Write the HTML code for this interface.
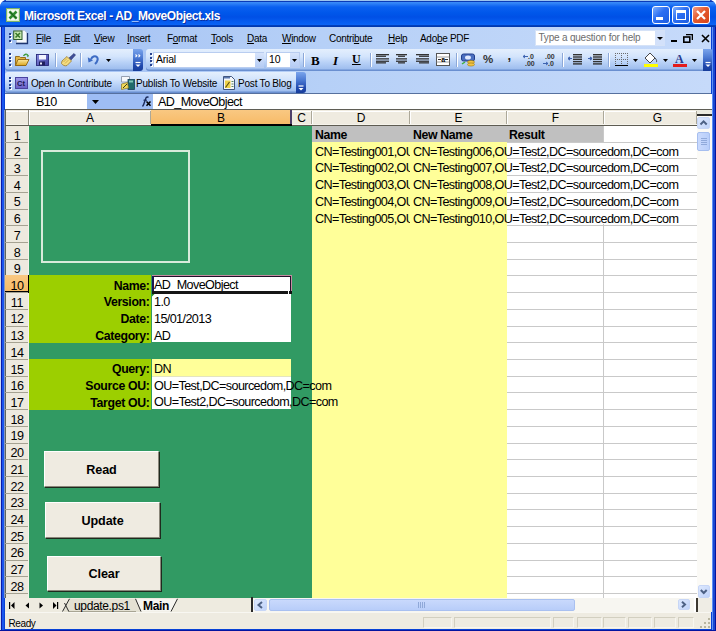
<!DOCTYPE html>
<html><head><meta charset="utf-8"><title>Microsoft Excel - AD_MoveObject.xls</title>
<style>html,body{margin:0;padding:0;}body{width:716px;height:631px;overflow:hidden;position:relative;font-family:'Liberation Sans', sans-serif;}</style>
</head><body>
<div style="position:absolute;left:0px;top:0px;width:716px;height:631px;background:#0842D6;border-radius:7px 7px 0 0"></div>
<div style="position:absolute;left:0px;top:0px;width:716px;height:27px;background:linear-gradient(#0A3AB8 0px,#0A3AB8 1.5px,#3C8EF8 2px,#2A7CF6 4px,#0A60F0 7px,#0057EA 13px,#0050E6 17px,#065CF0 22px,#0A64F5 25px,#0038B0 25.6px,#0038B0 27px);border-radius:7px 7px 0 0"></div>
<div style="position:absolute;left:6px;top:0px;width:704px;height:1px;background:#9CC4EE"></div>
<svg style="position:absolute;left:6px;top:8px" width="14" height="14" viewBox="0 0 14 14">
<rect x="0.5" y="0.5" width="13" height="13" fill="#DDEFD0" stroke="#7DB26A"/>
<rect x="2" y="2" width="10" height="10" fill="#F3FAEE"/>
<path d="M3.5 3.5 L10.5 10.5 M10.5 3.5 L3.5 10.5" stroke="#2E8A2E" stroke-width="2.6"/>
<path d="M3.5 3.5 L10.5 10.5" stroke="#1B5E1B" stroke-width="1"/>
</svg>
<div style="position:absolute;left:24px;top:9px;white-space:pre;font:bold 12px 'Liberation Sans', sans-serif;color:#fff;letter-spacing:-0.43px;text-shadow:1px 1px 0 #0A2FA0">Microsoft Excel - AD_MoveObject.xls</div>
<div style="position:absolute;left:652px;top:6px;width:18px;height:18px;background:linear-gradient(135deg,#7FB0FF,#2C6EF2 45%,#1D5DE0);border:1px solid #fff;border-radius:3px;box-sizing:border-box"></div>
<div style="position:absolute;left:672px;top:6px;width:18px;height:18px;background:linear-gradient(135deg,#7FB0FF,#2C6EF2 45%,#1D5DE0);border:1px solid #fff;border-radius:3px;box-sizing:border-box"></div>
<div style="position:absolute;left:692px;top:6px;width:18px;height:18px;background:linear-gradient(135deg,#F3A08A,#E35A2F 45%,#D84318);border:1px solid #fff;border-radius:3px;box-sizing:border-box"></div>
<div style="position:absolute;left:656px;top:17px;width:7px;height:3px;background:#fff"></div>
<div style="position:absolute;left:676px;top:10px;width:10px;height:10px;border:1px solid #fff;border-top-width:3px;box-sizing:border-box"></div>
<svg style="position:absolute;left:692px;top:6px" width="18" height="18"><path d="M5 5 L13 13 M13 5 L5 13" stroke="#fff" stroke-width="2.2"/></svg>
<div style="position:absolute;left:5px;top:27px;width:706px;height:66px;background:linear-gradient(90deg,#A2C0F3 0%,#B6D0F7 45%,#C6DAFA 100%)"></div>
<div style="position:absolute;left:9px;top:32.5px;width:2px;height:2px;background:#27418F;box-shadow:1px 1px 0 #fff"></div>
<div style="position:absolute;left:9px;top:36.05px;width:2px;height:2px;background:#27418F;box-shadow:1px 1px 0 #fff"></div>
<div style="position:absolute;left:9px;top:39.6px;width:2px;height:2px;background:#27418F;box-shadow:1px 1px 0 #fff"></div>
<svg style="position:absolute;left:13px;top:30px" width="16" height="15" viewBox="0 0 16 15">
<path d="M3.5 0.5 H11.5 L14 3 V13 H3.5 Z" fill="#F4F7FC" stroke="#B8C4DA" stroke-width=".8"/>
<path d="M3 13.5 H14.5 V3" stroke="#1E3470" stroke-width="1.3" fill="none"/>
<rect x="0.7" y="1" width="8.3" height="8.5" fill="#C8E8B0" stroke="#2E5E2E" stroke-width="1"/>
<path d="M2.5 3 L7 7.5 M7 3 L2.5 7.5" stroke="#3A7A2A" stroke-width="1.6"/>
</svg>
<div style="position:absolute;left:36px;top:33px;white-space:pre;font:10px 'Liberation Sans', sans-serif;color:#000;letter-spacing:-0.3px"><u>F</u>ile</div>
<div style="position:absolute;left:64px;top:33px;white-space:pre;font:10px 'Liberation Sans', sans-serif;color:#000;letter-spacing:-0.3px"><u>E</u>dit</div>
<div style="position:absolute;left:94px;top:33px;white-space:pre;font:10px 'Liberation Sans', sans-serif;color:#000;letter-spacing:-0.3px"><u>V</u>iew</div>
<div style="position:absolute;left:127px;top:33px;white-space:pre;font:10px 'Liberation Sans', sans-serif;color:#000;letter-spacing:-0.3px"><u>I</u>nsert</div>
<div style="position:absolute;left:167px;top:33px;white-space:pre;font:10px 'Liberation Sans', sans-serif;color:#000;letter-spacing:-0.3px">F<u>o</u>rmat</div>
<div style="position:absolute;left:211px;top:33px;white-space:pre;font:10px 'Liberation Sans', sans-serif;color:#000;letter-spacing:-0.3px"><u>T</u>ools</div>
<div style="position:absolute;left:247px;top:33px;white-space:pre;font:10px 'Liberation Sans', sans-serif;color:#000;letter-spacing:-0.3px"><u>D</u>ata</div>
<div style="position:absolute;left:282px;top:33px;white-space:pre;font:10px 'Liberation Sans', sans-serif;color:#000;letter-spacing:-0.3px"><u>W</u>indow</div>
<div style="position:absolute;left:329px;top:33px;white-space:pre;font:10px 'Liberation Sans', sans-serif;color:#000;letter-spacing:-0.3px">Contri<u>b</u>ute</div>
<div style="position:absolute;left:388px;top:33px;white-space:pre;font:10px 'Liberation Sans', sans-serif;color:#000;letter-spacing:-0.3px"><u>H</u>elp</div>
<div style="position:absolute;left:420px;top:33px;white-space:pre;font:10px 'Liberation Sans', sans-serif;color:#000;letter-spacing:-0.3px">Ado<u>b</u>e PDF</div>
<div style="position:absolute;left:535px;top:30px;width:130px;height:16px;background:#fff;border:1px solid #D5E2F7;box-sizing:border-box"></div>
<div style="position:absolute;left:538.5px;top:32px;white-space:pre;font:10px 'Liberation Sans', sans-serif;color:#6D6D6D;letter-spacing:-0.2px">Type a question for help</div>
<div style="position:absolute;left:654.5px;top:31px;width:10px;height:14px;background:#D3E1FA"></div>
<svg style="position:absolute;left:657px;top:37px" width="6" height="3"><path d="M0 0H6L3 3Z" fill="#000"/></svg>
<div style="position:absolute;left:670.5px;top:40px;width:6.5px;height:2px;background:#000"></div>
<svg style="position:absolute;left:683px;top:34px" width="10" height="9"><path d="M3 .5H9.5V6" stroke="#000" fill="none" stroke-width="1.6"/><rect x="0.8" y="3" width="6" height="5.2" stroke="#000" fill="none" stroke-width="1.6"/></svg>
<svg style="position:absolute;left:700.5px;top:33.5px" width="9" height="9"><path d="M1 1L8 8M8 1L1 8" stroke="#000" stroke-width="1.6"/></svg>
<div style="position:absolute;left:5px;top:49px;width:129px;height:22px;background:linear-gradient(#E4EFFD 0%,#D3E4FC 35%,#B9D2F7 60%,#97B8EC 100%);border-radius:3px 0 0 3px;box-shadow:inset 0 -1.5px 0 #6A8FD0"></div>
<div style="position:absolute;left:133px;top:49px;width:10px;height:22px;background:linear-gradient(#7AA4EC,#4A78D2 40%,#2149AE 75%,#163C9A);border-radius:0 3px 3px 0"></div>
<div style="position:absolute;left:9px;top:53.0px;width:2px;height:2px;background:#27418F;box-shadow:1px 1px 0 #fff"></div>
<div style="position:absolute;left:9px;top:56.55px;width:2px;height:2px;background:#27418F;box-shadow:1px 1px 0 #fff"></div>
<div style="position:absolute;left:9px;top:60.1px;width:2px;height:2px;background:#27418F;box-shadow:1px 1px 0 #fff"></div>
<div style="position:absolute;left:9px;top:63.65px;width:2px;height:2px;background:#27418F;box-shadow:1px 1px 0 #fff"></div>
<svg style="position:absolute;left:133px;top:49px" width="10" height="22"><path d="M2.5 5.5l1.3 1.3l-1.3 1.3M5.5 5.5l1.3 1.3l-1.3 1.3" stroke="#fff" stroke-width="1.1" fill="none"/><path d="M2.5 13.5H7.5" stroke="#fff" stroke-width="1.2"/><path d="M2.5 15.5H7.5L5 18Z" fill="#fff"/></svg>
<svg style="position:absolute;left:15px;top:53px" width="15" height="14" viewBox="0 0 15 14">
<defs><linearGradient id="fo" x1="0" y1="0" x2="0" y2="1"><stop offset="0" stop-color="#FCE9A0"/><stop offset="1" stop-color="#D9A520"/></linearGradient></defs>
<path d="M0.5 3.5 H4.5 L5.5 4.5 H10.5 V12.5 H0.5 Z" fill="#E2B440" stroke="#8E6410" stroke-width=".9"/>
<path d="M0.5 12.5 L3 6.5 H14 L11 12.5 Z" fill="url(#fo)" stroke="#8E6410" stroke-width=".9"/>
<path d="M8.5 3 C9.5 1,12 0.5,13 2.5" stroke="#3C9A3C" fill="none" stroke-width="1.3"/>
<path d="M11.5 2.5 L14 2 L13 4.5 Z" fill="#3C9A3C"/>
</svg>
<svg style="position:absolute;left:36px;top:54px" width="13" height="12" viewBox="0 0 13 12">
<defs><linearGradient id="fl" x1="0" y1="0" x2="1" y2="1"><stop offset="0" stop-color="#8C8EE0"/><stop offset="1" stop-color="#3A3D9E"/></linearGradient></defs>
<rect x="0.5" y="0.5" width="12" height="11" fill="url(#fl)" stroke="#28297A" stroke-width=".9"/>
<rect x="3" y="1" width="7" height="4.5" fill="#F4F5FF"/>
<rect x="3" y="7.5" width="6" height="4" fill="#1E1F5C"/>
<rect x="4" y="8.5" width="2" height="2" fill="#E8E8F8"/>
</svg>
<div style="position:absolute;left:55px;top:53px;width:1px;height:14px;background:#8CA8D8;box-shadow:1px 0 0 #fff"></div>
<svg style="position:absolute;left:60px;top:53px" width="16" height="14" viewBox="0 0 16 14">
<path d="M9 5 L14 0.5 L15.5 2 L11 7 Z" fill="#3F4E9A" stroke="#28336E" stroke-width=".6"/>
<path d="M2 8 L7 3.5 L11.5 8 L7 12.5 C5 13.5,2.5 12,1.5 10.5 Z" fill="#F4DC80" stroke="#9C7A28" stroke-width=".8"/>
<path d="M3.5 9 L7 5.5 M5 10.5 L8.5 7" stroke="#C9A640" stroke-width=".8"/>
</svg>
<div style="position:absolute;left:80px;top:53px;width:1px;height:14px;background:#8CA8D8;box-shadow:1px 0 0 #fff"></div>
<svg style="position:absolute;left:87px;top:54px" width="12" height="11" viewBox="0 0 12 11">
<path d="M4 5.5 C5 2.5,8 1.5,9.8 3 C11.5 4.5,10.5 8,8 10" stroke="#3E6CC4" stroke-width="2.1" fill="none"/>
<path d="M0.8 3.2 L6 6.5 L1.5 8.5 Z" fill="#3E6CC4"/>
</svg>
<svg style="position:absolute;left:105.5px;top:59px" width="5" height="3"><path d="M0 0H5L2.5 3Z" fill="#000"/></svg>
<div style="position:absolute;left:146px;top:49px;width:557px;height:22px;background:linear-gradient(#E4EFFD 0%,#D3E4FC 35%,#B9D2F7 60%,#97B8EC 100%);border-radius:3px 0 0 3px;box-shadow:inset 0 -1.5px 0 #6A8FD0"></div>
<div style="position:absolute;left:703px;top:49px;width:10px;height:22px;background:linear-gradient(#7AA4EC,#4A78D2 40%,#2149AE 75%,#163C9A);border-radius:0 3px 3px 0"></div>
<svg style="position:absolute;left:703px;top:49px" width="10" height="22"><path d="M2.5 13.5H7.5" stroke="#fff" stroke-width="1.2"/><path d="M2.5 15.5H7.5L5 18Z" fill="#fff"/></svg>
<div style="position:absolute;left:150px;top:53.0px;width:2px;height:2px;background:#27418F;box-shadow:1px 1px 0 #fff"></div>
<div style="position:absolute;left:150px;top:56.55px;width:2px;height:2px;background:#27418F;box-shadow:1px 1px 0 #fff"></div>
<div style="position:absolute;left:150px;top:60.1px;width:2px;height:2px;background:#27418F;box-shadow:1px 1px 0 #fff"></div>
<div style="position:absolute;left:150px;top:63.65px;width:2px;height:2px;background:#27418F;box-shadow:1px 1px 0 #fff"></div>
<div style="position:absolute;left:153px;top:52px;width:111px;height:16px;background:#fff;border:1px solid #B9CDF0;box-sizing:border-box"></div>
<div style="position:absolute;left:156px;top:52.5px;white-space:pre;font:10.5px 'Liberation Sans', sans-serif;color:#000;letter-spacing:-0.2px">Arial</div>
<div style="position:absolute;left:255px;top:53px;width:9px;height:14px;background:linear-gradient(#D7E4FB,#B5CCF4)"></div>
<svg style="position:absolute;left:257px;top:59px" width="5" height="3"><path d="M0 0H5L2.5 3Z" fill="#000"/></svg>
<div style="position:absolute;left:266px;top:52px;width:34px;height:16px;background:#fff;border:1px solid #B9CDF0;box-sizing:border-box"></div>
<div style="position:absolute;left:269px;top:52.5px;white-space:pre;font:10.5px 'Liberation Sans', sans-serif;color:#000;letter-spacing:-0.2px">10</div>
<div style="position:absolute;left:290px;top:53px;width:9px;height:14px;background:linear-gradient(#D7E4FB,#B5CCF4)"></div>
<svg style="position:absolute;left:292px;top:59px" width="5" height="3"><path d="M0 0H5L2.5 3Z" fill="#000"/></svg>
<div style="position:absolute;left:303px;top:53px;width:1px;height:14px;background:#8CA8D8;box-shadow:1px 0 0 #fff"></div>
<div style="position:absolute;left:311px;top:53px;white-space:pre;font:bold 13px 'Liberation Serif', serif;color:#000">B</div>
<div style="position:absolute;left:333px;top:53px;white-space:pre;font:italic bold 13px 'Liberation Serif', serif;color:#000">I</div>
<div style="position:absolute;left:352px;top:52px;white-space:pre;font:bold 12px 'Liberation Serif', serif;color:#000;text-decoration:underline">U</div>
<div style="position:absolute;left:370px;top:53px;width:1px;height:14px;background:#8CA8D8;box-shadow:1px 0 0 #fff"></div>
<svg style="position:absolute;left:376px;top:54px" width="13" height="10"><rect x="0" y="0" width="13" height="1.3" fill="#333"/><rect x="0" y="1.6" width="10" height="1.3" fill="#333"/><rect x="0" y="4.2" width="13" height="1.3" fill="#333"/><rect x="0" y="6.6" width="13" height="1.3" fill="#333"/><rect x="0" y="8.2" width="10" height="1.3" fill="#333"/></svg>
<svg style="position:absolute;left:395px;top:54px" width="13" height="10"><rect x="1.0" y="0" width="11" height="1.3" fill="#333"/><rect x="3.0" y="1.6" width="7" height="1.3" fill="#333"/><rect x="1.0" y="4.2" width="11" height="1.3" fill="#333"/><rect x="1.0" y="6.6" width="11" height="1.3" fill="#333"/><rect x="3.0" y="8.2" width="7" height="1.3" fill="#333"/></svg>
<svg style="position:absolute;left:416px;top:54px" width="13" height="10"><rect x="0" y="0" width="13" height="1.3" fill="#333"/><rect x="3" y="1.6" width="10" height="1.3" fill="#333"/><rect x="0" y="4.2" width="13" height="1.3" fill="#333"/><rect x="0" y="6.6" width="13" height="1.3" fill="#333"/><rect x="3" y="8.2" width="10" height="1.3" fill="#333"/></svg>
<svg style="position:absolute;left:436px;top:53px" width="14" height="13" viewBox="0 0 14 13">
<rect x="0.5" y="0.5" width="13" height="12" fill="#fff" stroke="#555"/>
<path d="M0.5 4H13.5M0.5 9H13.5" stroke="#888" stroke-width=".8"/>
<path d="M2 6.5H5M9 6.5H12" stroke="#333"/>
<text x="5.2" y="9" font-size="7" font-family="Liberation Sans" font-weight="bold" fill="#000">a</text>
</svg>
<div style="position:absolute;left:456px;top:53px;width:1px;height:14px;background:#8CA8D8;box-shadow:1px 0 0 #fff"></div>
<svg style="position:absolute;left:461px;top:53px" width="15" height="14" viewBox="0 0 15 14">
<rect x="0.5" y="1" width="13" height="7" rx="2" fill="#4B6FC0" stroke="#223F8D"/>
<ellipse cx="7" cy="4.5" rx="3" ry="2" fill="#E0EAFF"/>
<ellipse cx="10" cy="9" rx="3.5" ry="1.6" fill="#F2C343" stroke="#9C7A10" stroke-width=".6"/>
<ellipse cx="10" cy="11.5" rx="3.5" ry="1.6" fill="#F2C343" stroke="#9C7A10" stroke-width=".6"/>
<path d="M1 11 L4 9" stroke="#3FAF3F" stroke-width="1.5"/>
</svg>
<div style="position:absolute;left:483px;top:52.5px;white-space:pre;font:bold 11.5px 'Liberation Sans', sans-serif;color:#333">%</div>
<div style="position:absolute;left:507.5px;top:48px;white-space:pre;font:bold 13px 'Liberation Sans', sans-serif;color:#222">,</div>
<svg style="position:absolute;left:522px;top:53px" width="15" height="14" viewBox="0 0 15 14">
<text x="6" y="6" font-size="7" font-family="Liberation Sans" font-weight="bold" fill="#333">.0</text>
<text x="3" y="13" font-size="7" font-family="Liberation Sans" font-weight="bold" fill="#333">.00</text>
<path d="M1 3.5H6M1 3.5L3 2M1 3.5L3 5" stroke="#3F64B0" stroke-width="1"/>
</svg>
<svg style="position:absolute;left:542px;top:53px" width="15" height="14" viewBox="0 0 15 14">
<text x="3" y="6" font-size="7" font-family="Liberation Sans" font-weight="bold" fill="#333">.00</text>
<text x="6" y="13" font-size="7" font-family="Liberation Sans" font-weight="bold" fill="#333">.0</text>
<path d="M1 10.5H6M6 10.5L4 9M6 10.5L4 12" stroke="#3F64B0" stroke-width="1"/>
</svg>
<div style="position:absolute;left:562px;top:53px;width:1px;height:14px;background:#8CA8D8;box-shadow:1px 0 0 #fff"></div>
<svg style="position:absolute;left:568px;top:53px" width="15" height="13"><rect x="5" y="1.0" width="9" height="1.4" fill="#333"/><rect x="5" y="3.3" width="9" height="1.4" fill="#333"/><rect x="5" y="5.6" width="9" height="1.4" fill="#333"/><rect x="5" y="7.8999999999999995" width="9" height="1.4" fill="#333"/><rect x="5" y="10.2" width="9" height="1.4" fill="#333"/><path d="M0 5.5H4M0 5.5L2 4M0 5.5L2 7" stroke="#3F64B0" stroke-width="1.2"/></svg>
<svg style="position:absolute;left:588px;top:53px" width="15" height="13"><rect x="5" y="1.0" width="9" height="1.4" fill="#333"/><rect x="5" y="3.3" width="9" height="1.4" fill="#333"/><rect x="5" y="5.6" width="9" height="1.4" fill="#333"/><rect x="5" y="7.8999999999999995" width="9" height="1.4" fill="#333"/><rect x="5" y="10.2" width="9" height="1.4" fill="#333"/><path d="M0 5.5H4M4 5.5L2 4M4 5.5L2 7" stroke="#3F64B0" stroke-width="1.2"/></svg>
<div style="position:absolute;left:608px;top:53px;width:1px;height:14px;background:#8CA8D8;box-shadow:1px 0 0 #fff"></div>
<svg style="position:absolute;left:615px;top:53px" width="13" height="13" viewBox="0 0 13 13"><g fill="#6A6A6A"><rect x="0" y="0" width="1" height="1"/><rect x="0" y="0" width="1" height="1"/><rect x="0" y="6" width="1" height="1"/><rect x="6" y="0" width="1" height="1"/><rect x="0" y="12" width="1" height="1"/><rect x="12" y="0" width="1" height="1"/><rect x="2" y="0" width="1" height="1"/><rect x="0" y="2" width="1" height="1"/><rect x="2" y="6" width="1" height="1"/><rect x="6" y="2" width="1" height="1"/><rect x="2" y="12" width="1" height="1"/><rect x="12" y="2" width="1" height="1"/><rect x="4" y="0" width="1" height="1"/><rect x="0" y="4" width="1" height="1"/><rect x="4" y="6" width="1" height="1"/><rect x="6" y="4" width="1" height="1"/><rect x="4" y="12" width="1" height="1"/><rect x="12" y="4" width="1" height="1"/><rect x="6" y="0" width="1" height="1"/><rect x="0" y="6" width="1" height="1"/><rect x="6" y="6" width="1" height="1"/><rect x="6" y="6" width="1" height="1"/><rect x="6" y="12" width="1" height="1"/><rect x="12" y="6" width="1" height="1"/><rect x="8" y="0" width="1" height="1"/><rect x="0" y="8" width="1" height="1"/><rect x="8" y="6" width="1" height="1"/><rect x="6" y="8" width="1" height="1"/><rect x="8" y="12" width="1" height="1"/><rect x="12" y="8" width="1" height="1"/><rect x="10" y="0" width="1" height="1"/><rect x="0" y="10" width="1" height="1"/><rect x="10" y="6" width="1" height="1"/><rect x="6" y="10" width="1" height="1"/><rect x="10" y="12" width="1" height="1"/><rect x="12" y="10" width="1" height="1"/><rect x="12" y="0" width="1" height="1"/><rect x="0" y="12" width="1" height="1"/><rect x="12" y="6" width="1" height="1"/><rect x="6" y="12" width="1" height="1"/><rect x="12" y="12" width="1" height="1"/><rect x="12" y="12" width="1" height="1"/></g><rect x="0" y="12" width="13" height="1.3" fill="#000"/></svg>
<svg style="position:absolute;left:633px;top:59px" width="5" height="3"><path d="M0 0H5L2.5 3Z" fill="#000"/></svg>
<svg style="position:absolute;left:643px;top:52px" width="16" height="16" viewBox="0 0 16 16">
<path d="M2 6 L7 1 L12 6 L7 11 Z" fill="#fff" stroke="#333" stroke-width=".9"/>
<path d="M12 6 C14 8,14 10,13 10" stroke="#333" fill="none" stroke-width=".9"/>
<rect x="1" y="12" width="14" height="3" fill="#FFFF00"/>
</svg>
<svg style="position:absolute;left:663px;top:59px" width="5" height="3"><path d="M0 0H5L2.5 3Z" fill="#000"/></svg>
<svg style="position:absolute;left:673px;top:52px" width="15" height="16" viewBox="0 0 15 16">
<text x="2" y="11" font-size="12" font-family="Liberation Serif" font-weight="bold" fill="#283C8C">A</text>
<rect x="0" y="12" width="14" height="3" fill="#E31B1B"/>
</svg>
<svg style="position:absolute;left:692px;top:59px" width="5" height="3"><path d="M0 0H5L2.5 3Z" fill="#000"/></svg>
<div style="position:absolute;left:5px;top:71.5px;width:291px;height:21.3px;background:linear-gradient(#E4EFFD 0%,#D3E4FC 35%,#B9D2F7 60%,#97B8EC 100%);border-radius:3px 0 0 3px;box-shadow:inset 0 -1.5px 0 #6A8FD0"></div>
<div style="position:absolute;left:296px;top:71.5px;width:10px;height:21.3px;background:linear-gradient(#7AA4EC,#4A78D2 40%,#2149AE 75%,#163C9A);border-radius:0 3px 3px 0"></div>
<svg style="position:absolute;left:296px;top:72px" width="10" height="20"><path d="M2.5 14H7.5" stroke="#fff" stroke-width="1.2"/><path d="M2.5 16H7.5L5 18.5Z" fill="#fff"/></svg>
<div style="position:absolute;left:9px;top:76.5px;width:2px;height:2px;background:#27418F;box-shadow:1px 1px 0 #fff"></div>
<div style="position:absolute;left:9px;top:80.05px;width:2px;height:2px;background:#27418F;box-shadow:1px 1px 0 #fff"></div>
<div style="position:absolute;left:9px;top:83.6px;width:2px;height:2px;background:#27418F;box-shadow:1px 1px 0 #fff"></div>
<div style="position:absolute;left:9px;top:87.15px;width:2px;height:2px;background:#27418F;box-shadow:1px 1px 0 #fff"></div>
<div style="position:absolute;left:15px;top:77px;width:13px;height:12px;background:linear-gradient(#9A95E8,#6A62C8);border:1px solid #4A43A0;box-sizing:border-box"></div>
<div style="position:absolute;left:17px;top:78.5px;white-space:pre;font:bold 7.5px 'Liberation Sans', sans-serif;color:#1A1850">Ct</div>
<div style="position:absolute;left:31px;top:77.5px;white-space:pre;font:10px 'Liberation Sans', sans-serif;color:#000;letter-spacing:-0.2px">Open In Contribute</div>
<svg style="position:absolute;left:120.5px;top:75.5px" width="14" height="14" viewBox="0 0 14 14">
<path d="M0.5 0.5H8.5V6H0.5Z" fill="#F6F8FC" stroke="#8C96A8" stroke-width=".9"/>
<rect x="7" y="3.5" width="6.5" height="10" fill="#1F6A6A" stroke="#15405A" stroke-width=".8"/>
<rect x="8" y="4.5" width="4" height="2" fill="#7FC4B8"/>
<path d="M0.5 13.5 L0.5 8 L6.5 6.5 L7.5 12 Z" fill="#F2DA5A" stroke="#8A7420" stroke-width=".7"/>
<path d="M2 12 L6 8" stroke="#3A3A20" stroke-width="1"/>
</svg>
<div style="position:absolute;left:136px;top:77.5px;white-space:pre;font:10px 'Liberation Sans', sans-serif;color:#000;letter-spacing:-0.2px">Publish To Website</div>
<svg style="position:absolute;left:223px;top:75.5px" width="12" height="14" viewBox="0 0 12 14">
<path d="M0.5 0.5H8.5L11.5 3.5V13.5H0.5Z" fill="#F4F6FA" stroke="#2C4470" stroke-width=".9"/>
<rect x="1" y="1" width="6" height="1.5" fill="#5A78B0"/>
<rect x="2" y="4.5" width="5.5" height="7.5" fill="#EDD24A"/>
<path d="M2.5 11.5 L6.5 6" stroke="#5A4A10" stroke-width="1.1"/>
<path d="M8.5 5.5H10.5M8.5 8H10.5M8.5 10.5H10.5" stroke="#4A7A4A" stroke-width=".9"/>
</svg>
<div style="position:absolute;left:238px;top:77.5px;white-space:pre;font:10px 'Liberation Sans', sans-serif;color:#000;letter-spacing:-0.2px">Post To Blog</div>
<div style="position:absolute;left:5px;top:93px;width:706px;height:16px;background:#9EBDF4"></div>
<div style="position:absolute;left:5px;top:94px;width:82px;height:15px;background:#fff"></div>
<div style="position:absolute;left:36px;top:94.5px;white-space:pre;font:12.6px 'Liberation Sans', sans-serif;color:#000;letter-spacing:-0.6px">B10</div>
<svg style="position:absolute;left:92px;top:100px" width="7" height="4"><path d="M0 0H7L3.5 4Z" fill="#000"/></svg>
<svg style="position:absolute;left:141px;top:96px" width="11" height="11" viewBox="0 0 11 11"><path d="M1.5 10.5 C3 9,3.5 6,4.5 3 C5 1.2,6 0.8,7.5 1.2" stroke="#1A2A5A" stroke-width="1.4" fill="none"/><path d="M2.5 4.2H6" stroke="#1A2A5A" stroke-width="1.1"/><path d="M5.5 5.5L9.5 9.8M9.5 5.5L5.5 9.8" stroke="#000" stroke-width="1.5"/></svg>
<div style="position:absolute;left:5px;top:92.6px;width:706px;height:1.2px;background:#56709E"></div>
<div style="position:absolute;left:153px;top:94px;width:558.6px;height:15px;background:#fff"></div>
<div style="position:absolute;left:158px;top:94.5px;white-space:pre;font:12.6px 'Liberation Sans', sans-serif;color:#000;letter-spacing:-0.6px">AD_MoveObject</div>
<div style="position:absolute;left:5px;top:109px;width:692px;height:489px;background:#fff"></div>
<div style="position:absolute;left:5px;top:109px;width:706.6px;height:1.2px;background:#5F5D55"></div>
<div style="position:absolute;left:5px;top:110px;width:692px;height:15px;background:#EFEBE0"></div>
<div style="position:absolute;left:5px;top:110.5px;width:692px;height:1px;background:#FFFFFF"></div>
<div style="position:absolute;left:5px;top:124px;width:692px;height:1px;background:#F6F4EC"></div>
<div style="position:absolute;left:150px;top:111px;width:1px;height:13px;background:#ACA899"></div>
<div style="position:absolute;left:151px;top:111px;width:1px;height:13px;background:#fff"></div>
<div style="position:absolute;left:29px;top:111px;width:122px;text-align:center;font:12px 'Liberation Sans', sans-serif;color:#000">A</div>
<div style="position:absolute;left:151px;top:110px;width:140px;height:15px;background:linear-gradient(#F9C882,#F7BA66)"></div>
<div style="position:absolute;left:290px;top:111px;width:1px;height:13px;background:#ACA899"></div>
<div style="position:absolute;left:291px;top:111px;width:1px;height:13px;background:#fff"></div>
<div style="position:absolute;left:290px;top:110px;width:2px;height:15px;background:#4E3F6A"></div>
<div style="position:absolute;left:151px;top:111px;width:140px;text-align:center;font:12px 'Liberation Sans', sans-serif;color:#000">B</div>
<div style="position:absolute;left:311px;top:111px;width:1px;height:13px;background:#ACA899"></div>
<div style="position:absolute;left:312px;top:111px;width:1px;height:13px;background:#fff"></div>
<div style="position:absolute;left:291px;top:111px;width:21px;text-align:center;font:12px 'Liberation Sans', sans-serif;color:#000">C</div>
<div style="position:absolute;left:409px;top:111px;width:1px;height:13px;background:#ACA899"></div>
<div style="position:absolute;left:410px;top:111px;width:1px;height:13px;background:#fff"></div>
<div style="position:absolute;left:312px;top:111px;width:98px;text-align:center;font:12px 'Liberation Sans', sans-serif;color:#000">D</div>
<div style="position:absolute;left:506px;top:111px;width:1px;height:13px;background:#ACA899"></div>
<div style="position:absolute;left:507px;top:111px;width:1px;height:13px;background:#fff"></div>
<div style="position:absolute;left:410px;top:111px;width:97px;text-align:center;font:12px 'Liberation Sans', sans-serif;color:#000">E</div>
<div style="position:absolute;left:603px;top:111px;width:1px;height:13px;background:#ACA899"></div>
<div style="position:absolute;left:604px;top:111px;width:1px;height:13px;background:#fff"></div>
<div style="position:absolute;left:507px;top:111px;width:97px;text-align:center;font:12px 'Liberation Sans', sans-serif;color:#000">F</div>
<div style="position:absolute;left:696px;top:111px;width:1px;height:13px;background:#ACA899"></div>
<div style="position:absolute;left:697px;top:111px;width:1px;height:13px;background:#fff"></div>
<div style="position:absolute;left:604px;top:111px;width:107px;text-align:center;font:12px 'Liberation Sans', sans-serif;color:#000">G</div>
<div style="position:absolute;left:5px;top:125px;width:24px;height:473px;background:#EDE9DE"></div>
<div style="position:absolute;left:4.2px;top:110px;width:0.8px;height:488px;background:#8898C0"></div>
<div style="position:absolute;left:5px;top:110px;width:0.8px;height:488px;background:#5E665E"></div>
<div style="position:absolute;left:28px;top:110px;width:1px;height:15px;background:#8E8B7E"></div>
<div style="position:absolute;left:29px;top:110px;width:1px;height:15px;background:#fff"></div>
<div style="position:absolute;left:28px;top:125px;width:1px;height:473px;background:#F4F2EA"></div>
<div style="position:absolute;left:5px;top:142px;width:23px;height:1px;background:#A5A292"></div>
<div style="position:absolute;left:5px;top:128.6px;width:24px;text-align:center;font:12.6px 'Liberation Sans', sans-serif;color:#000;letter-spacing:-0.4px">1</div>
<div style="position:absolute;left:5px;top:158px;width:23px;height:1px;background:#A5A292"></div>
<div style="position:absolute;left:5px;top:145.314px;width:24px;text-align:center;font:12.6px 'Liberation Sans', sans-serif;color:#000;letter-spacing:-0.4px">2</div>
<div style="position:absolute;left:5px;top:175px;width:23px;height:1px;background:#A5A292"></div>
<div style="position:absolute;left:5px;top:162.028px;width:24px;text-align:center;font:12.6px 'Liberation Sans', sans-serif;color:#000;letter-spacing:-0.4px">3</div>
<div style="position:absolute;left:5px;top:192px;width:23px;height:1px;background:#A5A292"></div>
<div style="position:absolute;left:5px;top:178.742px;width:24px;text-align:center;font:12.6px 'Liberation Sans', sans-serif;color:#000;letter-spacing:-0.4px">4</div>
<div style="position:absolute;left:5px;top:209px;width:23px;height:1px;background:#A5A292"></div>
<div style="position:absolute;left:5px;top:195.456px;width:24px;text-align:center;font:12.6px 'Liberation Sans', sans-serif;color:#000;letter-spacing:-0.4px">5</div>
<div style="position:absolute;left:5px;top:225px;width:23px;height:1px;background:#A5A292"></div>
<div style="position:absolute;left:5px;top:212.17px;width:24px;text-align:center;font:12.6px 'Liberation Sans', sans-serif;color:#000;letter-spacing:-0.4px">6</div>
<div style="position:absolute;left:5px;top:242px;width:23px;height:1px;background:#A5A292"></div>
<div style="position:absolute;left:5px;top:228.884px;width:24px;text-align:center;font:12.6px 'Liberation Sans', sans-serif;color:#000;letter-spacing:-0.4px">7</div>
<div style="position:absolute;left:5px;top:259px;width:23px;height:1px;background:#A5A292"></div>
<div style="position:absolute;left:5px;top:245.59799999999998px;width:24px;text-align:center;font:12.6px 'Liberation Sans', sans-serif;color:#000;letter-spacing:-0.4px">8</div>
<div style="position:absolute;left:5px;top:275px;width:23px;height:1px;background:#A5A292"></div>
<div style="position:absolute;left:5px;top:262.312px;width:24px;text-align:center;font:12.6px 'Liberation Sans', sans-serif;color:#000;letter-spacing:-0.4px">9</div>
<div style="position:absolute;left:5px;top:275.426px;width:23px;height:16.714px;background:linear-gradient(#F9C882,#F7BA66)"></div>
<div style="position:absolute;left:5px;top:291.14px;width:24px;height:1.5px;background:#000"></div>
<div style="position:absolute;left:27.5px;top:275.426px;width:1.5px;height:16.714px;background:#000"></div>
<div style="position:absolute;left:5px;top:292px;width:23px;height:1px;background:#A5A292"></div>
<div style="position:absolute;left:5px;top:279.026px;width:24px;text-align:center;font:12.6px 'Liberation Sans', sans-serif;color:#000;letter-spacing:-0.4px">10</div>
<div style="position:absolute;left:5px;top:309px;width:23px;height:1px;background:#A5A292"></div>
<div style="position:absolute;left:5px;top:295.74px;width:24px;text-align:center;font:12.6px 'Liberation Sans', sans-serif;color:#000;letter-spacing:-0.4px">11</div>
<div style="position:absolute;left:5px;top:326px;width:23px;height:1px;background:#A5A292"></div>
<div style="position:absolute;left:5px;top:312.454px;width:24px;text-align:center;font:12.6px 'Liberation Sans', sans-serif;color:#000;letter-spacing:-0.4px">12</div>
<div style="position:absolute;left:5px;top:342px;width:23px;height:1px;background:#A5A292"></div>
<div style="position:absolute;left:5px;top:329.168px;width:24px;text-align:center;font:12.6px 'Liberation Sans', sans-serif;color:#000;letter-spacing:-0.4px">13</div>
<div style="position:absolute;left:5px;top:359px;width:23px;height:1px;background:#A5A292"></div>
<div style="position:absolute;left:5px;top:345.882px;width:24px;text-align:center;font:12.6px 'Liberation Sans', sans-serif;color:#000;letter-spacing:-0.4px">14</div>
<div style="position:absolute;left:5px;top:376px;width:23px;height:1px;background:#A5A292"></div>
<div style="position:absolute;left:5px;top:362.596px;width:24px;text-align:center;font:12.6px 'Liberation Sans', sans-serif;color:#000;letter-spacing:-0.4px">15</div>
<div style="position:absolute;left:5px;top:392px;width:23px;height:1px;background:#A5A292"></div>
<div style="position:absolute;left:5px;top:379.31px;width:24px;text-align:center;font:12.6px 'Liberation Sans', sans-serif;color:#000;letter-spacing:-0.4px">16</div>
<div style="position:absolute;left:5px;top:409px;width:23px;height:1px;background:#A5A292"></div>
<div style="position:absolute;left:5px;top:396.024px;width:24px;text-align:center;font:12.6px 'Liberation Sans', sans-serif;color:#000;letter-spacing:-0.4px">17</div>
<div style="position:absolute;left:5px;top:426px;width:23px;height:1px;background:#A5A292"></div>
<div style="position:absolute;left:5px;top:412.738px;width:24px;text-align:center;font:12.6px 'Liberation Sans', sans-serif;color:#000;letter-spacing:-0.4px">18</div>
<div style="position:absolute;left:5px;top:443px;width:23px;height:1px;background:#A5A292"></div>
<div style="position:absolute;left:5px;top:429.452px;width:24px;text-align:center;font:12.6px 'Liberation Sans', sans-serif;color:#000;letter-spacing:-0.4px">19</div>
<div style="position:absolute;left:5px;top:459px;width:23px;height:1px;background:#A5A292"></div>
<div style="position:absolute;left:5px;top:446.166px;width:24px;text-align:center;font:12.6px 'Liberation Sans', sans-serif;color:#000;letter-spacing:-0.4px">20</div>
<div style="position:absolute;left:5px;top:476px;width:23px;height:1px;background:#A5A292"></div>
<div style="position:absolute;left:5px;top:462.88px;width:24px;text-align:center;font:12.6px 'Liberation Sans', sans-serif;color:#000;letter-spacing:-0.4px">21</div>
<div style="position:absolute;left:5px;top:493px;width:23px;height:1px;background:#A5A292"></div>
<div style="position:absolute;left:5px;top:479.594px;width:24px;text-align:center;font:12.6px 'Liberation Sans', sans-serif;color:#000;letter-spacing:-0.4px">22</div>
<div style="position:absolute;left:5px;top:509px;width:23px;height:1px;background:#A5A292"></div>
<div style="position:absolute;left:5px;top:496.308px;width:24px;text-align:center;font:12.6px 'Liberation Sans', sans-serif;color:#000;letter-spacing:-0.4px">23</div>
<div style="position:absolute;left:5px;top:526px;width:23px;height:1px;background:#A5A292"></div>
<div style="position:absolute;left:5px;top:513.0219999999999px;width:24px;text-align:center;font:12.6px 'Liberation Sans', sans-serif;color:#000;letter-spacing:-0.4px">24</div>
<div style="position:absolute;left:5px;top:543px;width:23px;height:1px;background:#A5A292"></div>
<div style="position:absolute;left:5px;top:529.736px;width:24px;text-align:center;font:12.6px 'Liberation Sans', sans-serif;color:#000;letter-spacing:-0.4px">25</div>
<div style="position:absolute;left:5px;top:560px;width:23px;height:1px;background:#A5A292"></div>
<div style="position:absolute;left:5px;top:546.4499999999999px;width:24px;text-align:center;font:12.6px 'Liberation Sans', sans-serif;color:#000;letter-spacing:-0.4px">26</div>
<div style="position:absolute;left:5px;top:576px;width:23px;height:1px;background:#A5A292"></div>
<div style="position:absolute;left:5px;top:563.164px;width:24px;text-align:center;font:12.6px 'Liberation Sans', sans-serif;color:#000;letter-spacing:-0.4px">27</div>
<div style="position:absolute;left:5px;top:593px;width:23px;height:1px;background:#A5A292"></div>
<div style="position:absolute;left:5px;top:579.878px;width:24px;text-align:center;font:12.6px 'Liberation Sans', sans-serif;color:#000;letter-spacing:-0.4px">28</div>
<div style="position:absolute;left:5px;top:610px;width:23px;height:1px;background:#A5A292"></div>
<div style="position:absolute;left:5px;top:596.592px;width:24px;text-align:center;font:12.6px 'Liberation Sans', sans-serif;color:#000;letter-spacing:-0.4px">29</div>
<div style="position:absolute;left:507px;top:142px;width:190px;height:1px;background:#C9C9C9"></div>
<div style="position:absolute;left:507px;top:158px;width:190px;height:1px;background:#C9C9C9"></div>
<div style="position:absolute;left:507px;top:175px;width:190px;height:1px;background:#C9C9C9"></div>
<div style="position:absolute;left:507px;top:192px;width:190px;height:1px;background:#C9C9C9"></div>
<div style="position:absolute;left:507px;top:209px;width:190px;height:1px;background:#C9C9C9"></div>
<div style="position:absolute;left:507px;top:225px;width:190px;height:1px;background:#C9C9C9"></div>
<div style="position:absolute;left:507px;top:242px;width:190px;height:1px;background:#C9C9C9"></div>
<div style="position:absolute;left:507px;top:259px;width:190px;height:1px;background:#C9C9C9"></div>
<div style="position:absolute;left:507px;top:275px;width:190px;height:1px;background:#C9C9C9"></div>
<div style="position:absolute;left:507px;top:292px;width:190px;height:1px;background:#C9C9C9"></div>
<div style="position:absolute;left:507px;top:309px;width:190px;height:1px;background:#C9C9C9"></div>
<div style="position:absolute;left:507px;top:326px;width:190px;height:1px;background:#C9C9C9"></div>
<div style="position:absolute;left:507px;top:342px;width:190px;height:1px;background:#C9C9C9"></div>
<div style="position:absolute;left:507px;top:359px;width:190px;height:1px;background:#C9C9C9"></div>
<div style="position:absolute;left:507px;top:376px;width:190px;height:1px;background:#C9C9C9"></div>
<div style="position:absolute;left:507px;top:392px;width:190px;height:1px;background:#C9C9C9"></div>
<div style="position:absolute;left:507px;top:409px;width:190px;height:1px;background:#C9C9C9"></div>
<div style="position:absolute;left:507px;top:426px;width:190px;height:1px;background:#C9C9C9"></div>
<div style="position:absolute;left:507px;top:443px;width:190px;height:1px;background:#C9C9C9"></div>
<div style="position:absolute;left:507px;top:459px;width:190px;height:1px;background:#C9C9C9"></div>
<div style="position:absolute;left:507px;top:476px;width:190px;height:1px;background:#C9C9C9"></div>
<div style="position:absolute;left:507px;top:493px;width:190px;height:1px;background:#C9C9C9"></div>
<div style="position:absolute;left:507px;top:509px;width:190px;height:1px;background:#C9C9C9"></div>
<div style="position:absolute;left:507px;top:526px;width:190px;height:1px;background:#C9C9C9"></div>
<div style="position:absolute;left:507px;top:543px;width:190px;height:1px;background:#C9C9C9"></div>
<div style="position:absolute;left:507px;top:560px;width:190px;height:1px;background:#C9C9C9"></div>
<div style="position:absolute;left:507px;top:576px;width:190px;height:1px;background:#C9C9C9"></div>
<div style="position:absolute;left:507px;top:593px;width:190px;height:1px;background:#C9C9C9"></div>
<div style="position:absolute;left:603px;top:125px;width:1px;height:17px;background:#C9C9C9"></div>
<div style="position:absolute;left:603px;top:224.284px;width:1px;height:373.716px;background:#C9C9C9"></div>
<div style="position:absolute;left:29px;top:125px;width:283px;height:473px;background:#319A63"></div>
<div style="position:absolute;left:29px;top:275.426px;width:122px;height:17.214px;background:#9CCF00"></div>
<div style="position:absolute;left:29px;top:292.14px;width:122px;height:17.214px;background:#9CCF00"></div>
<div style="position:absolute;left:29px;top:308.854px;width:122px;height:17.214px;background:#9CCF00"></div>
<div style="position:absolute;left:29px;top:325.568px;width:122px;height:17.214px;background:#9CCF00"></div>
<div style="position:absolute;left:29px;top:358.996px;width:122px;height:17.214px;background:#9CCF00"></div>
<div style="position:absolute;left:29px;top:375.71px;width:122px;height:17.214px;background:#9CCF00"></div>
<div style="position:absolute;left:29px;top:392.424px;width:122px;height:17.214px;background:#9CCF00"></div>
<div style="position:absolute;left:152px;top:275.426px;width:139px;height:16.714px;background:#fff"></div>
<div style="position:absolute;left:152px;top:292px;width:139px;height:1px;background:#C9C9C9"></div>
<div style="position:absolute;left:152px;top:292.14px;width:139px;height:16.714px;background:#fff"></div>
<div style="position:absolute;left:152px;top:309px;width:139px;height:1px;background:#C9C9C9"></div>
<div style="position:absolute;left:152px;top:308.854px;width:139px;height:16.714px;background:#fff"></div>
<div style="position:absolute;left:152px;top:326px;width:139px;height:1px;background:#C9C9C9"></div>
<div style="position:absolute;left:152px;top:325.568px;width:139px;height:16.714px;background:#fff"></div>
<div style="position:absolute;left:152px;top:375.71px;width:139px;height:16.714px;background:#fff"></div>
<div style="position:absolute;left:152px;top:392px;width:139px;height:1px;background:#C9C9C9"></div>
<div style="position:absolute;left:152px;top:392.424px;width:139px;height:16.714px;background:#fff"></div>
<div style="position:absolute;left:152px;top:358.996px;width:139px;height:16.714px;background:#FFFF99"></div>
<div style="position:absolute;left:152px;top:376px;width:139px;height:1px;background:#E4E4C0"></div>
<div style="position:absolute;left:312px;top:125px;width:195px;height:473px;background:#FFFF99"></div>
<div style="position:absolute;left:312px;top:125px;width:291px;height:16.714px;background:#C0C0C0"></div>
<div style="position:absolute;left:41px;top:149.5px;width:149px;height:113.5px;border:2px solid #D8EBDB;box-sizing:border-box"></div>
<div style="position:absolute;left:29px;top:278.726px;width:120.5px;text-align:right;white-space:pre;font:bold 12.3px 'Liberation Sans', sans-serif;color:#000;letter-spacing:-0.35px">Name:</div>
<div style="position:absolute;left:29px;top:295.44px;width:120.5px;text-align:right;white-space:pre;font:bold 12.3px 'Liberation Sans', sans-serif;color:#000;letter-spacing:-0.35px">Version:</div>
<div style="position:absolute;left:29px;top:312.154px;width:120.5px;text-align:right;white-space:pre;font:bold 12.3px 'Liberation Sans', sans-serif;color:#000;letter-spacing:-0.35px">Date:</div>
<div style="position:absolute;left:29px;top:328.868px;width:120.5px;text-align:right;white-space:pre;font:bold 12.3px 'Liberation Sans', sans-serif;color:#000;letter-spacing:-0.35px">Category:</div>
<div style="position:absolute;left:29px;top:362.296px;width:120.5px;text-align:right;white-space:pre;font:bold 12.3px 'Liberation Sans', sans-serif;color:#000;letter-spacing:-0.35px">Query:</div>
<div style="position:absolute;left:29px;top:379.01px;width:120.5px;text-align:right;white-space:pre;font:bold 12.3px 'Liberation Sans', sans-serif;color:#000;letter-spacing:-0.35px">Source OU:</div>
<div style="position:absolute;left:29px;top:395.724px;width:120.5px;text-align:right;white-space:pre;font:bold 12.3px 'Liberation Sans', sans-serif;color:#000;letter-spacing:-0.35px">Target OU:</div>
<div style="position:absolute;left:154px;top:278.426px;white-space:pre;font:12.6px 'Liberation Sans', sans-serif;color:#000;letter-spacing:-0.6px">AD_MoveObject</div>
<div style="position:absolute;left:154px;top:295.14px;white-space:pre;font:12.6px 'Liberation Sans', sans-serif;color:#000;letter-spacing:-0.6px">1.0</div>
<div style="position:absolute;left:154px;top:311.854px;white-space:pre;font:12.6px 'Liberation Sans', sans-serif;color:#000;letter-spacing:-0.6px">15/01/2013</div>
<div style="position:absolute;left:154px;top:328.568px;white-space:pre;font:12.6px 'Liberation Sans', sans-serif;color:#000;letter-spacing:-0.6px">AD</div>
<div style="position:absolute;left:154px;top:361.996px;white-space:pre;font:12.6px 'Liberation Sans', sans-serif;color:#000;letter-spacing:-0.6px">DN</div>
<div style="position:absolute;left:154px;top:378.71px;white-space:pre;font:12.6px 'Liberation Sans', sans-serif;color:#000;letter-spacing:-0.6px">OU=Test,DC=sourcedom,DC=com</div>
<div style="position:absolute;left:154px;top:395.424px;white-space:pre;font:12.6px 'Liberation Sans', sans-serif;color:#000;letter-spacing:-0.6px">OU=Test2,DC=sourcedom,DC=com</div>
<svg style="position:absolute;left:152px;top:292.14px" width="5" height="5"><path d="M0 0H4.5L0 4.5Z" fill="#1E8E1E"/></svg>
<div style="position:absolute;left:152px;top:275px;width:139.5px;height:1px;background:#C48CA0"></div>
<div style="position:absolute;left:152px;top:276px;width:138.5px;height:1.3px;background:#22102A"></div>
<div style="position:absolute;left:152px;top:276px;width:1.6px;height:16px;background:#1C1650"></div>
<div style="position:absolute;left:289.7px;top:276px;width:1.3px;height:15px;background:#22102A"></div>
<div style="position:absolute;left:291px;top:275px;width:0.8px;height:16px;background:#C48CA0"></div>
<div style="position:absolute;left:152px;top:291.2px;width:136px;height:2.5px;background:#161616"></div>
<div style="position:absolute;left:289px;top:290.7px;width:2.8px;height:3.8px;background:#111"></div>
<div style="position:absolute;left:315px;top:128.0px;white-space:pre;font:bold 12.3px 'Liberation Sans', sans-serif;color:#000;letter-spacing:-0.35px">Name</div>
<div style="position:absolute;left:413px;top:128.0px;white-space:pre;font:bold 12.3px 'Liberation Sans', sans-serif;color:#000;letter-spacing:-0.35px">New Name</div>
<div style="position:absolute;left:509px;top:128.0px;white-space:pre;font:bold 12.3px 'Liberation Sans', sans-serif;color:#000;letter-spacing:-0.35px">Result</div>
<div style="position:absolute;left:312px;top:144.714px;width:98px;overflow:hidden;white-space:pre;font:12.6px 'Liberation Sans', sans-serif;color:#000;letter-spacing:-0.6px"><span style="padding-left:3px">CN=Testing001,OU=Test,DC=sourcedom,DC=com</span></div>
<div style="position:absolute;left:413px;top:144.714px;white-space:pre;font:12.6px 'Liberation Sans', sans-serif;color:#000;letter-spacing:-0.6px">CN=Testing006,OU=Test2,DC=sourcedom,DC=com</div>
<div style="position:absolute;left:312px;top:161.428px;width:98px;overflow:hidden;white-space:pre;font:12.6px 'Liberation Sans', sans-serif;color:#000;letter-spacing:-0.6px"><span style="padding-left:3px">CN=Testing002,OU=Test,DC=sourcedom,DC=com</span></div>
<div style="position:absolute;left:413px;top:161.428px;white-space:pre;font:12.6px 'Liberation Sans', sans-serif;color:#000;letter-spacing:-0.6px">CN=Testing007,OU=Test2,DC=sourcedom,DC=com</div>
<div style="position:absolute;left:312px;top:178.142px;width:98px;overflow:hidden;white-space:pre;font:12.6px 'Liberation Sans', sans-serif;color:#000;letter-spacing:-0.6px"><span style="padding-left:3px">CN=Testing003,OU=Test,DC=sourcedom,DC=com</span></div>
<div style="position:absolute;left:413px;top:178.142px;white-space:pre;font:12.6px 'Liberation Sans', sans-serif;color:#000;letter-spacing:-0.6px">CN=Testing008,OU=Test2,DC=sourcedom,DC=com</div>
<div style="position:absolute;left:312px;top:194.856px;width:98px;overflow:hidden;white-space:pre;font:12.6px 'Liberation Sans', sans-serif;color:#000;letter-spacing:-0.6px"><span style="padding-left:3px">CN=Testing004,OU=Test,DC=sourcedom,DC=com</span></div>
<div style="position:absolute;left:413px;top:194.856px;white-space:pre;font:12.6px 'Liberation Sans', sans-serif;color:#000;letter-spacing:-0.6px">CN=Testing009,OU=Test2,DC=sourcedom,DC=com</div>
<div style="position:absolute;left:312px;top:211.57px;width:98px;overflow:hidden;white-space:pre;font:12.6px 'Liberation Sans', sans-serif;color:#000;letter-spacing:-0.6px"><span style="padding-left:3px">CN=Testing005,OU=Test,DC=sourcedom,DC=com</span></div>
<div style="position:absolute;left:413px;top:211.57px;white-space:pre;font:12.6px 'Liberation Sans', sans-serif;color:#000;letter-spacing:-0.6px">CN=Testing010,OU=Test2,DC=sourcedom,DC=com</div>
<div style="position:absolute;left:5px;top:124.8px;width:692px;height:1.1px;background:#5E5C52"></div>
<div style="position:absolute;left:151px;top:124.3px;width:141px;height:1.7px;background:#000"></div>
<div style="position:absolute;left:44px;top:451px;width:115px;height:36px;background:#EFEBE1;border-top:1px solid #fff;border-left:1px solid #fff;border-right:1px solid #8A877A;border-bottom:1px solid #8A877A;box-shadow:1px 1px 0 #1E2A1E;box-sizing:border-box"></div>
<div style="position:absolute;left:44px;top:462.5px;width:115px;text-align:center;font:bold 12.6px 'Liberation Sans', sans-serif;color:#000;letter-spacing:-0.1px">Read</div>
<div style="position:absolute;left:45px;top:502px;width:115px;height:36px;background:#EFEBE1;border-top:1px solid #fff;border-left:1px solid #fff;border-right:1px solid #8A877A;border-bottom:1px solid #8A877A;box-shadow:1px 1px 0 #1E2A1E;box-sizing:border-box"></div>
<div style="position:absolute;left:45px;top:513.5px;width:115px;text-align:center;font:bold 12.6px 'Liberation Sans', sans-serif;color:#000;letter-spacing:-0.1px">Update</div>
<div style="position:absolute;left:47px;top:556px;width:114px;height:35px;background:#EFEBE1;border-top:1px solid #fff;border-left:1px solid #fff;border-right:1px solid #8A877A;border-bottom:1px solid #8A877A;box-shadow:1px 1px 0 #1E2A1E;box-sizing:border-box"></div>
<div style="position:absolute;left:47px;top:567.0px;width:114px;text-align:center;font:bold 12.6px 'Liberation Sans', sans-serif;color:#000;letter-spacing:-0.1px">Clear</div>
<div style="position:absolute;left:697px;top:110px;width:14.6px;height:488px;background:#FBFAF6"></div>
<div style="position:absolute;left:697px;top:110.2px;width:14.6px;height:3.8px;background:#EBEAE0"></div>
<div style="position:absolute;left:697px;top:114px;width:14.6px;height:2px;background:#2A2A2A"></div>
<div style="position:absolute;left:697px;top:117px;width:13.2px;height:12.2px;background:linear-gradient(135deg,#DDE8FE,#C0D3F9);border:1px solid #C7D6F6;border-radius:2px;box-sizing:border-box"></div>
<svg style="position:absolute;left:697px;top:117px" width="13.2" height="12.2"><path d="M3.5 7.5L6.6 4.4L9.7 7.5" stroke="#4D6185" stroke-width="2" fill="none"/></svg>
<div style="position:absolute;left:697px;top:131.8px;width:13.2px;height:19.4px;background:linear-gradient(90deg,#CADAFD,#B8CEFA);border:1px solid #A6BEEF;border-radius:2px;box-sizing:border-box"></div>
<svg style="position:absolute;left:697px;top:132px" width="14" height="19"><path d="M4 6.5H10M4 8.5H10M4 10.5H10M4 12.5H10" stroke="#90A9DA" stroke-width="1"/></svg>
<div style="position:absolute;left:698px;top:584.5px;width:11.5px;height:13px;background:linear-gradient(135deg,#DDE8FE,#C0D3F9);border:1px solid #C7D6F6;border-radius:2px;box-sizing:border-box"></div>
<svg style="position:absolute;left:698px;top:584.5px" width="11.5" height="13"><path d="M2.8 5L5.75 8L8.7 5" stroke="#4D6185" stroke-width="2" fill="none"/></svg>
<div style="position:absolute;left:5px;top:598px;width:248px;height:14px;background:#EEEBE0"></div>
<svg style="position:absolute;left:8px;top:601px" width="54" height="9" viewBox="0 0 54 9">
<rect x="1" y="1" width="1.2" height="7" fill="#000"/><path d="M6.5 1V8L3 4.5Z" fill="#000"/>
<path d="M21 1.5V7.5L17.5 4.5Z" fill="#000"/>
<path d="M31.5 1.5V7.5L35 4.5Z" fill="#000"/>
<path d="M45 1V8L48.5 4.5Z" fill="#000"/><rect x="49" y="1" width="1.2" height="7" fill="#000"/>
</svg>
<svg style="position:absolute;left:60px;top:597px" width="125" height="16" viewBox="0 0 125 16">
<path d="M3 15 L8.5 2 H76 L81.5 15 Z" fill="#E4E1D3"/>
<path d="M76 2 L81.5 14.5 H111 L117 2 Z" fill="#F6F5F0"/>
<path d="M8.5 14.5 H76" fill="none" stroke="#A8A594" stroke-width="1"/><path d="M2.5 14.5 L9.5 1.8 M4.5 6 L8.8 14.5 M75.5 1.8 L81 14.5 M111 14.5 L117.5 1.8" fill="none" stroke="#2A2A2A" stroke-width="1"/>
</svg>
<div style="position:absolute;left:74px;top:598.6px;white-space:pre;font:12px 'Liberation Sans', sans-serif;color:#000;letter-spacing:-0.35px">update.ps1</div>
<div style="position:absolute;left:143px;top:598.6px;white-space:pre;font:bold 12px 'Liberation Sans', sans-serif;color:#000;letter-spacing:-0.35px">Main</div>
<div style="position:absolute;left:251px;top:597px;width:2px;height:15px;background:#2A2A2A"></div>
<div style="position:absolute;left:253px;top:598px;width:444px;height:14px;background:#F7F6F1"></div>
<div style="position:absolute;left:254px;top:599px;width:13px;height:12px;background:linear-gradient(135deg,#DDE8FE,#C0D3F9);border:1px solid #C7D6F6;border-radius:2px;box-sizing:border-box"></div>
<svg style="position:absolute;left:254px;top:599px" width="13" height="12"><path d="M8 3L4.5 6L8 9" stroke="#4D6185" stroke-width="2" fill="none"/></svg>
<div style="position:absolute;left:269px;top:599px;width:306px;height:12px;background:linear-gradient(#C9D9FC,#B8CDF9);border:1px solid #A9C0F0;border-radius:2px;box-sizing:border-box"></div>
<div style="position:absolute;left:418px;top:602px;width:1px;height:6px;background:#8FA8D8"></div>
<div style="position:absolute;left:420px;top:602px;width:1px;height:6px;background:#8FA8D8"></div>
<div style="position:absolute;left:422px;top:602px;width:1px;height:6px;background:#8FA8D8"></div>
<div style="position:absolute;left:424px;top:602px;width:1px;height:6px;background:#8FA8D8"></div>
<div style="position:absolute;left:678.3px;top:599.4px;width:11.3px;height:11px;background:linear-gradient(135deg,#DDE8FE,#C0D3F9);border:1px solid #C7D6F6;border-radius:2px;box-sizing:border-box"></div>
<svg style="position:absolute;left:678.3px;top:599.4px" width="11.3" height="11"><path d="M4 2.8L7 5.5L4 8.2" stroke="#4D6185" stroke-width="2" fill="none"/></svg>
<div style="position:absolute;left:693.5px;top:598px;width:2px;height:14px;background:#FFFFFF"></div>
<div style="position:absolute;left:696px;top:597.5px;width:2px;height:14.5px;background:#3C3830"></div>
<div style="position:absolute;left:698px;top:598px;width:13.6px;height:14px;background:#EFEDE5"></div>
<div style="position:absolute;left:5px;top:612px;width:706px;height:18px;background:#EEEBE1"></div>
<div style="position:absolute;left:5px;top:612px;width:706px;height:1px;background:#F8F7F2"></div>
<div style="position:absolute;left:8.5px;top:617.7px;white-space:pre;font:10px 'Liberation Sans', sans-serif;color:#000;letter-spacing:-0.4px">Ready</div>
<div style="position:absolute;left:423px;top:617px;width:28.5px;height:11px;border:1px solid #D2CFC0;border-right-color:#F7F6F0;border-bottom-color:#F7F6F0;box-sizing:border-box"></div>
<div style="position:absolute;left:454px;top:617px;width:96.5px;height:11px;border:1px solid #D2CFC0;border-right-color:#F7F6F0;border-bottom-color:#F7F6F0;box-sizing:border-box"></div>
<div style="position:absolute;left:553px;top:617px;width:21px;height:11px;border:1px solid #D2CFC0;border-right-color:#F7F6F0;border-bottom-color:#F7F6F0;box-sizing:border-box"></div>
<div style="position:absolute;left:576.5px;top:617px;width:25.0px;height:11px;border:1px solid #D2CFC0;border-right-color:#F7F6F0;border-bottom-color:#F7F6F0;box-sizing:border-box"></div>
<div style="position:absolute;left:603px;top:617px;width:22.5px;height:11px;border:1px solid #D2CFC0;border-right-color:#F7F6F0;border-bottom-color:#F7F6F0;box-sizing:border-box"></div>
<div style="position:absolute;left:628px;top:617px;width:24px;height:11px;border:1px solid #D2CFC0;border-right-color:#F7F6F0;border-bottom-color:#F7F6F0;box-sizing:border-box"></div>
<div style="position:absolute;left:654px;top:617px;width:21.5px;height:11px;border:1px solid #D2CFC0;border-right-color:#F7F6F0;border-bottom-color:#F7F6F0;box-sizing:border-box"></div>
<div style="position:absolute;left:678px;top:617px;width:16px;height:11px;border:1px solid #D2CFC0;border-right-color:#F7F6F0;border-bottom-color:#F7F6F0;box-sizing:border-box"></div>
<svg style="position:absolute;left:699px;top:617px" width="12" height="12"><g fill="#B9B6A0"><rect x="9" y="1" width="2" height="2"/><rect x="9" y="5" width="2" height="2"/><rect x="9" y="9" width="2" height="2"/><rect x="5" y="5" width="2" height="2"/><rect x="5" y="9" width="2" height="2"/><rect x="1" y="9" width="2" height="2"/></g></svg>
<div style="position:absolute;left:0px;top:629.4px;width:716px;height:1.6px;background:#0842D6"></div>
<div style="position:absolute;left:0px;top:27px;width:1px;height:604px;background:#C8D8F4"></div>
<div style="position:absolute;left:1px;top:27px;width:1px;height:604px;background:#0A1AAA"></div>
<div style="position:absolute;left:2px;top:27px;width:2.2px;height:604px;background:#1A56EE"></div>
<div style="position:absolute;left:711.6px;top:27px;width:1.4px;height:604px;background:#5E90F6"></div>
<div style="position:absolute;left:713px;top:27px;width:1.5px;height:604px;background:#1A48D0"></div>
<div style="position:absolute;left:714.5px;top:27px;width:1.5px;height:604px;background:#0414A0"></div>
<div style="position:absolute;left:0px;top:630px;width:716px;height:1px;background:#0414A0"></div>
</body></html>
